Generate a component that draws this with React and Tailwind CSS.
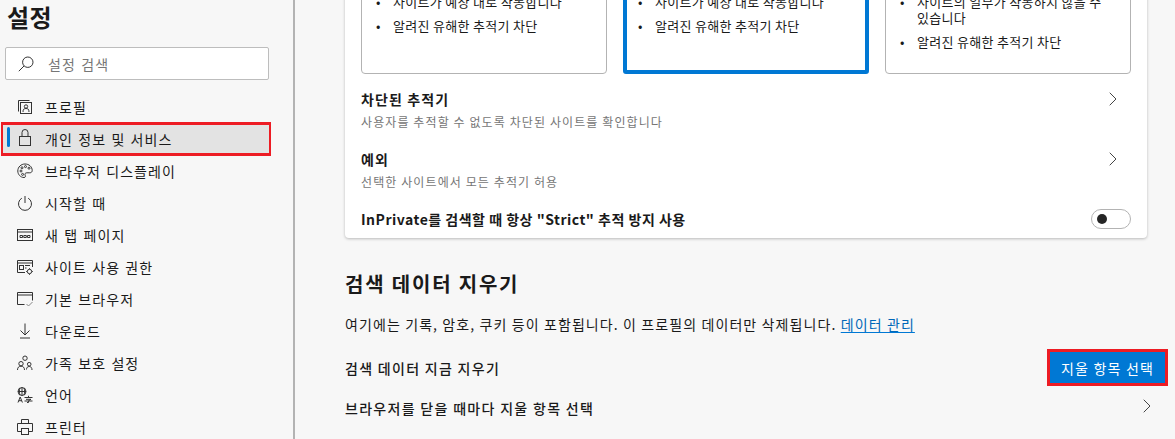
import React from "react";
import { ChevronRight } from "lucide-react";

const stroke = { fill: "none", stroke: "currentColor", strokeWidth: 1 };

function Icon({ children }) {
  return (
    <svg viewBox="0 0 16 16" className="w-4 h-4 shrink-0 overflow-visible text-[#333]" {...stroke}>
      {children}
    </svg>
  );
}

const navItems = [
  {
    label: "프로필",
    icon: (
      <>
        <path d="M1.500 12.500V1.500h11" />
        <rect x="3.500" y="3.500" width="11" height="11" />
        <circle cx="9" cy="7.500" r="1.700" />
        <path d="M6 13c0-3 1.200-3.500 3-3.500s3 .5 3 3.500" />
      </>
    ),
  },
  {
    label: "개인 정보 및 서비스",
    active: true,
    icon: (
      <>
        <rect x="2.500" y="5.500" width="11" height="9" />
        <path d="M5 5.500V1.500a3 3 0 0 1 6 0v4" />
      </>
    ),
  },
  {
    label: "브라우저 디스플레이",
    icon: (
      <>
        <path d="M8 1C4 1 .8 4 .8 8c0 3.500 2.800 6.500 6.200 6.500 1.600 0 1.700-1.200 1.200-2.200-.6-1.300 0-2.500 1.600-2.500h3c1.400 0 2.400-.9 2.400-2.300C15.200 3.700 12 1 8 1z" />
        <circle cx="4" cy="8" r="1" />
        <circle cx="5" cy="4.800" r="1" />
        <circle cx="8.500" cy="3.600" r="1" />
        <circle cx="12" cy="5.200" r="1" />
        <circle cx="5.600" cy="11.400" r="1" />
      </>
    ),
  },
  {
    label: "시작할 때",
    icon: (
      <>
        <path d="M8 1v7" />
        <path d="M4.800 3.200a6.500 6.500 0 1 0 6.400 0" />
      </>
    ),
  },
  {
    label: "새 탭 페이지",
    icon: (
      <>
        <rect x=".5" y="2.500" width="15" height="11" />
        <path d="M.5 5h15" />
        <path d="M3 8.500h2.500v2H3zM6.800 8.500h2.500v2H6.800zM10.500 8.500H13v2h-2.500z" />
      </>
    ),
  },
  {
    label: "사이트 사용 권한",
    icon: (
      <>
        <path d="M8 13.500H.5v-12h15V8" />
        <path d="M.5 4h15" />
        <rect x="2.500" y="6.500" width="4" height="4" />
        <path d="M8 6.500h5M8 9h1.500" />
        <circle cx="12.500" cy="12.500" r="2.200" />
        <path d="M12.500 9.200v1M12.500 14.800v1M9.200 12.500h1M14.800 12.500h1" />
      </>
    ),
  },
  {
    label: "기본 브라우저",
    icon: (
      <>
        <path d="M7.500 13.500h-7v-12h15v8" />
        <path d="M.5 4h15" />
        <path d="M9.500 13l2 2 4-4" stroke="#888" />
      </>
    ),
  },
  {
    label: "다운로드",
    icon: (
      <>
        <path d="M8 .5v11" />
        <path d="M3.500 7.500L8 12l4.500-4.500" />
        <path d="M3 15h10" />
      </>
    ),
  },
  {
    label: "가족 보호 설정",
    icon: (
      <>
        <circle cx="8" cy="3.200" r="2.200" />
        <circle cx="4" cy="8.700" r="2.200" />
        <circle cx="12.200" cy="9.200" r="1.800" />
        <path d="M.5 15c0-2.600 1.400-3.800 3.500-3.800S7.500 12.400 7.500 15M9.500 14.500c0-2 1.100-3 2.700-3s2.800 1 2.800 3.500" />
      </>
    ),
  },
  {
    label: "언어",
    icon: (
      <>
        <circle cx="5" cy="4.500" r="4" />
        <path d="M1 4.500h8M5 .5v8M3 1c-.9 2.300-.9 4.700 0 7M7 1c.9 2.300.9 4.700 0 7" />
        <path d="M1 15.500l2.200-5.500 2.200 5.500M1.800 13.700h2.800" />
        <path d="M7.500 10.500h8M11.500 8.800v1.700M9 12.300h5l-2.500 1.500v1.700H10M7.500 14h8" />
      </>
    ),
  },
  {
    label: "프린터",
    icon: (
      <>
        <path d="M4.500 4.500v-4h7v4" />
        <path d="M4.500 12.500h-4v-8h15v8h-4" />
        <rect x="4.500" y="9.500" width="7" height="6" />
      </>
    ),
  },
];

function Sidebar() {
  return (
    <aside className="w-[295px] h-[439px] shrink-0 overflow-hidden border-r-2 border-[#b3b3b3]">
      <h1 className="h-[47px] pl-[7px] pt-[1px] text-2xl leading-[32px] font-bold tracking-[0.5px] text-[#1a1a1a]">설정</h1>
      <div className="ml-[5px] w-[264px] h-[33px] flex items-center gap-[14px] pl-3 bg-white border border-[#bdbdbd] rounded-[2px] text-sm text-[#767676]">
        <svg viewBox="0 0 16 16" className="w-4 h-4 text-[#333]" {...stroke}>
          <circle cx="9.800" cy="6.200" r="5.200" />
          <path d="M6 10L.8 15.200" />
        </svg>
        <span className="tracking-[1.100px] [word-spacing:1px]">설정 검색</span>
      </div>
      <nav className="mt-[11px] flex flex-col">
        {navItems.map((item) =>
          item.active ? (
            <div
              key={item.label}
              className="relative -my-px ml-px w-[270px] h-[34px] shrink-0 flex items-center gap-3 pl-[14px] bg-[#e3e3e3] border-x-2 border-y-[3px] border-[#ed1c24] text-sm tracking-[1.100px] [word-spacing:1px] text-[#1a1a1a]"
            >
              <span className="absolute left-1 top-[2px] w-[3px] h-5 bg-[#0078d4] rounded-full" />
              <Icon>{item.icon}</Icon>
              {item.label}
            </div>
          ) : (
            <div
              key={item.label}
              className="h-8 shrink-0 flex items-center gap-3 pl-[17px] text-sm tracking-[1.100px] [word-spacing:1px] text-[#1a1a1a]"
            >
              <Icon>{item.icon}</Icon>
              {item.label}
            </div>
          )
        )}
      </nav>
    </aside>
  );
}

function PreventCard({ children, selected, wide }) {
  if (selected) {
    return (
      <div className="w-[246px] h-[90px] pl-[9px] pr-3 border-4 border-[#0078d4] rounded-[3px]">{children}</div>
    );
  }
  return (
    <div className={"w-[246px] h-[90px] pl-3 border border-[#b3b3b3] rounded-[4px] " + (wide ? "pr-7" : "pr-3")}>
      {children}
    </div>
  );
}

function Bullet({ children, className }) {
  return (
    <div className={"flex text-[13px] leading-4 tracking-[0.3px] text-[#1a1a1a] " + (className || "")}>
      <span className="w-[19px] pl-[2px] shrink-0">•</span>
      <span>{children}</span>
    </div>
  );
}

function LinkRow({ title, sub }) {
  return (
    <div className="h-[60px] pt-[9px] flex items-start justify-between">
      <div>
        <div className="text-sm leading-[20px] font-semibold tracking-[1.100px] text-[#1a1a1a]">{title}</div>
        <div className="mt-1 text-[12px] leading-[18px] tracking-[1.100px] text-[#767676]">{sub}</div>
      </div>
      <ChevronRight className="w-6 h-6 -mt-[2px] mr-[6px] text-[#444]" strokeWidth={1} />
    </div>
  );
}

export default function App() {
  return (
    <div
      className="w-[1175px] h-[439px] overflow-hidden flex bg-[#f7f7f7]"
      style={{ fontFamily: '"Noto Sans CJK KR", "Open Sans", sans-serif' }}
    >
      <Sidebar />
      <main className="flex-1 pl-[50px] pr-7">
        <section className="-mt-[16px] h-[254px] px-4 bg-white rounded-b-[4px] shadow-[0_1px_3px_rgba(0,0,0,0.25)]">
          <div className="flex gap-4">
            <PreventCard>
              <Bullet className="mt-[9px]">사이트가 예상 내로 작동합니다</Bullet>
              <Bullet className="mt-2">알려진 유해한 추적기 차단</Bullet>
            </PreventCard>
            <PreventCard selected>
              <Bullet className="mt-[6px]">사이트가 예상 내로 작동합니다</Bullet>
              <Bullet className="mt-2">알려진 유해한 추적기 차단</Bullet>
            </PreventCard>
            <PreventCard wide>
              <Bullet className="mt-[9px]">사이트의 일부가 작동하지 않을 수 있습니다</Bullet>
              <Bullet className="mt-2">알려진 유해한 추적기 차단</Bullet>
            </PreventCard>
          </div>
          <div className="mt-[6px]">
            <LinkRow title="차단된 추적기" sub="사용자를 추적할 수 없도록 차단된 사이트를 확인합니다" />
            <LinkRow title="예외" sub="선택한 사이트에서 모든 추적기 허용" />
          </div>
          <div className="h-[30px] mt-1 flex items-center justify-between">
            <span className="text-sm font-semibold tracking-[0.500px] text-[#1a1a1a]">InPrivate를 검색할 때 항상 "Strict" 추적 방지 사용</span>
            <span className="w-10 h-5 flex items-center pl-[5px] bg-white border border-[#b3b3b3] rounded-full">
              <span className="w-[10px] h-[10px] rounded-full bg-[#262626]" />
            </span>
          </div>
        </section>
        <h2 className="mt-[32px] text-[20px] leading-[28px] font-bold tracking-[1.800px] text-[#1a1a1a]">검색 데이터 지우기</h2>
        <p className="mt-[16px] text-sm leading-[20px] tracking-[1.100px] text-[#1a1a1a]">
          여기에는 기록, 암호, 쿠키 등이 포함됩니다. 이 프로필의 데이터만 삭제됩니다.{" "}
          <span className="text-[#0067b8] underline underline-offset-2 decoration-[#0078d4]">데이터 관리</span>
        </p>
        <div className="mt-[15px] h-[37px] flex items-center justify-between -mr-[21px]">
          <span className="text-sm font-medium tracking-[1.300px] text-[#1a1a1a]">검색 데이터 지금 지우기</span>
          <button className="w-[121px] h-[37px] bg-[#0078d4] border-[3px] border-[#ed1c24] text-white text-sm tracking-[1.200px]">지울 항목 선택</button>
        </div>
        <div className="mt-[6px] h-8 flex items-center justify-between -mr-[21px]">
          <span className="text-sm font-medium tracking-[1.300px] text-[#1a1a1a]">브라우저를 닫을 때마다 지울 항목 선택</span>
          <ChevronRight className="w-6 h-6 mr-[9px] -mt-1 text-[#444]" strokeWidth={1} />
        </div>
      </main>
    </div>
  );
}
